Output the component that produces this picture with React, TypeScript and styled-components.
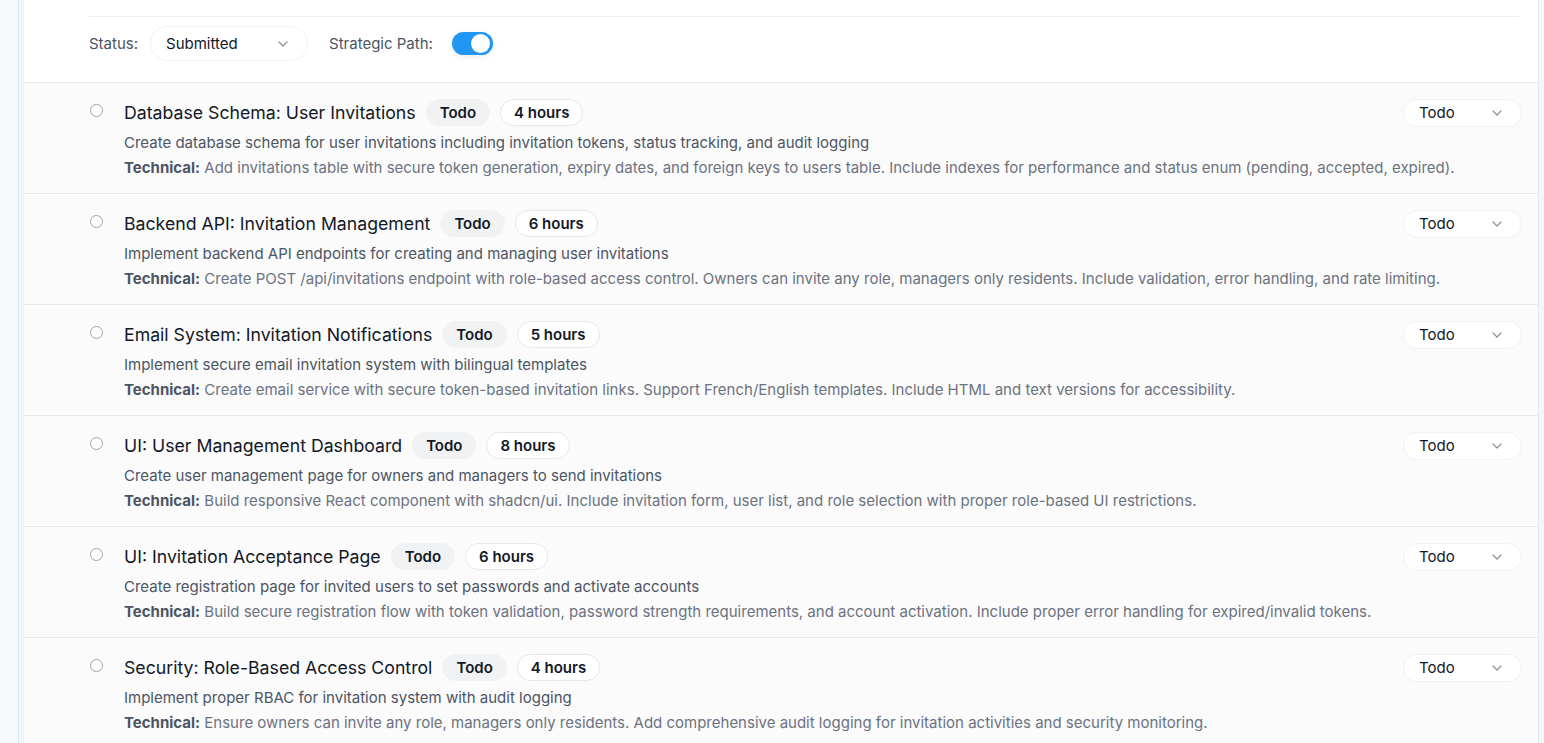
import React from "react";
import styled, { createGlobalStyle } from "styled-components";
import { ChevronDown } from "lucide-react";

const Global = createGlobalStyle`
  html, body { margin: 0; padding: 0; }
  body {
    background: #f7f9fb;
    font-family: Inter, "Noto Sans", "Liberation Sans", sans-serif;
    color: #111827;
    overflow: hidden;
  }
`;

const Shell = styled.div`
  display: grid;
  grid-template-columns: 19px 1fr;
  min-height: 743px;
`;

const Rail = styled.div`
  background: #f7f9fb;
  border-right: 1px solid #dde5ee;
`;

const Main = styled.div`
  padding: 0 5px 0 4px;
  background: #f4f7fa;
`;

const Panel = styled.div`
  background: #ffffff;
  border-left: 1px solid #eef1f4;
  border-right: 1px solid #e3e8ee;
  min-height: 743px;
`;

const Header = styled.div`
  padding: 16px 19px 0 65px;
  border-bottom: 1px solid #e5e7eb;
`;

const TopRule = styled.div`
  height: 1px;
  background: #eeeff1;
`;

const Filters = styled.div`
  display: flex;
  align-items: center;
  padding: 9px 0 21px;
`;

const Label = styled.span`
  font-size: 15px;
  color: #4b5563;
  margin-right: 12px;
`;

const Select = styled.div<{ $w: number; $h: number }>`
  display: flex;
  align-items: center;
  justify-content: space-between;
  flex-shrink: 0;
  box-sizing: border-box;
  width: ${(p) => p.$w}px;
  height: ${(p) => p.$h}px;
  padding: 0 16px 0 15px;
  border: 1px solid #f1f2f4;
  border-radius: 999px;
  background: #ffffff;
  font-size: 15px;
  color: #111827;
  svg { color: #8a8f98; }
`;

const StatusSelect = styled(Select)`
  margin-left: auto;
`;

const Spacer = styled.div<{ $w: number }>`
  width: ${(p) => p.$w}px;
`;

const Toggle = styled.div`
  position: relative;
  width: 41px;
  height: 23px;
  border-radius: 999px;
  background: #2196f3;
  margin-left: 7px;
  box-shadow: 0 2px 6px rgba(0, 0, 0, 0.08);
`;

const Knob = styled.span`
  position: absolute;
  top: 2px;
  right: 3px;
  width: 19px;
  height: 19px;
  border-radius: 50%;
  background: #ffffff;
`;

const Row = styled.div`
  display: grid;
  grid-template-columns: 13px 1fr;
  column-gap: 21px;
  padding: 16px 16px 13px 66px;
  background: #fbfbfc;
  border-bottom: 1px solid #e7e9ec;
`;

const Radio = styled.span`
  width: 13px;
  height: 13px;
  box-sizing: border-box;
  border: 1.5px solid #9ca3af;
  border-radius: 50%;
  margin-top: 5px;
  background: #ffffff;
`;

const Body = styled.div`
  display: flex;
  flex-direction: column;
  min-width: 0;
`;

const TitleLine = styled.div`
  display: flex;
  align-items: center;
  height: 27px;
  gap: 10px;
`;

const Title = styled.span`
  font-size: 17.7px;
  color: #111827;
`;

const Badge = styled.span<{ $outline?: boolean }>`
  display: inline-flex;
  align-items: center;
  height: 27px;
  box-sizing: border-box;
  padding: 0 13px;
  border-radius: 999px;
  font-size: 15px;
  font-weight: 600;
  color: #111827;
  background: ${(p) => (p.$outline ? "#ffffff" : "#f1f2f4")};
  border: 1px solid ${(p) => (p.$outline ? "#e5e7eb" : "#f1f2f4")};
`;

const Desc = styled.div`
  margin-top: 4px;
  font-size: 15px;
  line-height: 25px;
  color: #4b5563;
`;

const Tech = styled.div`
  font-size: 15px;
  line-height: 25px;
  color: #6b7280;
  white-space: nowrap;
  b { font-weight: 700; color: #4b5563; }
`;

const tasks = [
  {
    title: "Database Schema: User Invitations",
    hours: "4 hours",
    desc: "Create database schema for user invitations including invitation tokens, status tracking, and audit logging",
    tech: "Add invitations table with secure token generation, expiry dates, and foreign keys to users table. Include indexes for performance and status enum (pending, accepted, expired).",
  },
  {
    title: "Backend API: Invitation Management",
    hours: "6 hours",
    desc: "Implement backend API endpoints for creating and managing user invitations",
    tech: "Create POST /api/invitations endpoint with role-based access control. Owners can invite any role, managers only residents. Include validation, error handling, and rate limiting.",
  },
  {
    title: "Email System: Invitation Notifications",
    hours: "5 hours",
    desc: "Implement secure email invitation system with bilingual templates",
    tech: "Create email service with secure token-based invitation links. Support French/English templates. Include HTML and text versions for accessibility.",
  },
  {
    title: "UI: User Management Dashboard",
    hours: "8 hours",
    desc: "Create user management page for owners and managers to send invitations",
    tech: "Build responsive React component with shadcn/ui. Include invitation form, user list, and role selection with proper role-based UI restrictions.",
  },
  {
    title: "UI: Invitation Acceptance Page",
    hours: "6 hours",
    desc: "Create registration page for invited users to set passwords and activate accounts",
    tech: "Build secure registration flow with token validation, password strength requirements, and account activation. Include proper error handling for expired/invalid tokens.",
  },
  {
    title: "Security: Role-Based Access Control",
    hours: "4 hours",
    desc: "Implement proper RBAC for invitation system with audit logging",
    tech: "Ensure owners can invite any role, managers only residents. Add comprehensive audit logging for invitation activities and security monitoring.",
  },
];

export default function App() {
  return (
    <>
      <Global />
      <Shell>
        <Rail />
        <Main>
          <Panel>
            <Header>
              <TopRule />
              <Filters>
                <Label>Status:</Label>
                <Select $w={158} $h={35}>
                  <span>Submitted</span>
                  <ChevronDown size={16} strokeWidth={1.8} />
                </Select>
                <Spacer $w={21} />
                <Label>Strategic Path:</Label>
                <Toggle>
                  <Knob />
                </Toggle>
              </Filters>
            </Header>
            {tasks.map((t) => (
              <Row key={t.title}>
                <Radio />
                <Body>
                  <TitleLine>
                    <Title>{t.title}</Title>
                    <Badge>Todo</Badge>
                    <Badge $outline>{t.hours}</Badge>
                    <StatusSelect $w={119} $h={28}>
                      <span>Todo</span>
                      <ChevronDown size={16} strokeWidth={1.8} />
                    </StatusSelect>
                  </TitleLine>
                  <Desc>{t.desc}</Desc>
                  <Tech>
                    <b>Technical:</b> {t.tech}
                  </Tech>
                </Body>
              </Row>
            ))}
          </Panel>
        </Main>
      </Shell>
    </>
  );
}
